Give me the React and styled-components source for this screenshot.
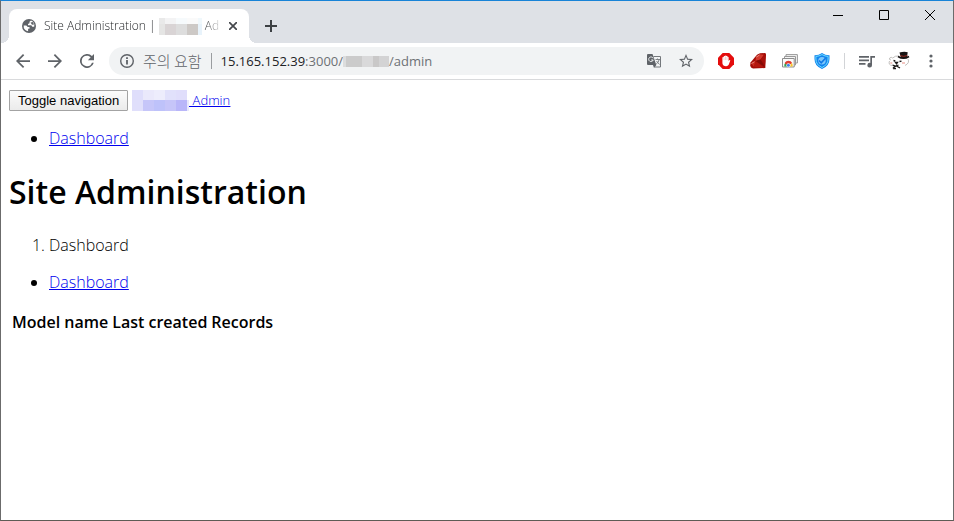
import React from 'react';
import styled, { createGlobalStyle } from 'styled-components';

const GlobalStyle = createGlobalStyle`
  body {
    margin: 0;
    font-family: 'Open Sans', 'Noto Sans CJK KR', sans-serif;
    color: #000;
    background: #fff;
  }

  * {
    box-sizing: border-box;
  }
`;

const Window = styled.div`
  display: flex;
  flex-direction: column;
  min-height: 100vh;
  background: #fff;
  border: 1px solid #6b6b6b;
  border-top-color: #1883d7;
  border-bottom-color: #5d5c55;
  overflow: hidden;
`;

const TitleBar = styled.div`
  display: flex;
  align-items: flex-start;
  height: 42px;
  padding-left: 8px;
  background: #dee1e6;
`;

const Tab = styled.div`
  position: relative;
  display: flex;
  align-items: center;
  width: 240px;
  height: 34px;
  margin-top: 8px;
  padding: 0 8px 0 13px;
  background: #fff;
  border-radius: 8px 8px 0 0;

  &::before,
  &::after {
    content: '';
    position: absolute;
    bottom: 0;
    width: 8px;
    height: 8px;
  }

  &::before {
    right: 100%;
    background: radial-gradient(circle at 0 0, #dee1e6 8px, #fff 8px);
  }

  &::after {
    left: 100%;
    background: radial-gradient(circle at 100% 0, #dee1e6 8px, #fff 8px);
  }
`;

const TabTitle = styled.div`
  display: flex;
  flex: 1;
  align-items: center;
  min-width: 0;
  margin-left: 8px;
  color: #1f2124;
  font-size: 12px;
  font-weight: 300;
  line-height: 18px;
  white-space: pre;
  mask-image: linear-gradient(to right, #000 88%, transparent 99%);
`;

const IconButton = styled.button`
  display: flex;
  flex: none;
  align-items: center;
  justify-content: center;
  width: ${({ $width }) => $width || 32}px;
  height: ${({ $height }) => $height || 28}px;
  padding: 0;
  color: ${({ $color }) => $color || '#5f6368'};
  background: none;
  border: 0;
`;

const NewTab = styled(IconButton)`
  margin: 11px 0 0 8px;
`;

const Controls = styled.div`
  display: flex;
  margin-left: auto;
`;

const Toolbar = styled.div`
  display: flex;
  align-items: center;
  height: 37px;
  padding: 0 6px;
  border-bottom: 1px solid #d9dadc;
`;

const Omnibox = styled.div`
  display: flex;
  flex: 1;
  align-items: center;
  min-width: 0;
  height: 28px;
  margin: 0 6px;
  padding: 0 2px 0 11px;
  color: #6d7175;
  font-size: 13px;
  font-weight: 400;
  background: #f1f3f4;
  border-radius: 14px;
`;

const Warning = styled.span`
  margin-left: 9px;
  color: #5f6368;
  font-family: 'Noto Sans CJK KR', sans-serif;
  font-size: 15px;
  font-weight: 300;
  line-height: 20px;
`;

const Address = styled.div`
  display: flex;
  flex: 1;
  align-items: center;
  margin-left: 9px;
`;

const Host = styled.span`
  color: #202124;
`;

const Divider = styled.span`
  width: 1px;
  height: 16px;
  margin-left: ${({ $gap }) => $gap}px;
  margin-right: ${({ $after }) => $after || 0}px;
  background: ${({ $color }) => $color};
`;

const Mosaic = styled.span`
  display: inline-grid;
  grid-template-columns: ${({ $columns }) => $columns};
  grid-template-rows: ${({ $rows }) => $rows};
  flex: none;
  vertical-align: middle;
`;

const Cell = styled.span`
  background: ${({ $color }) => $color};
`;

const Page = styled.main`
  flex: 1;
  padding: 8px;
  font-size: 16px;
  font-weight: 300;
  line-height: 21px;
`;

const NavHeader = styled.div`
  display: flex;
  align-items: center;
  height: 24px;
`;

const ToggleButton = styled.button`
  height: 21px;
  padding: 0 8px;
  color: #000;
  font-family: 'Liberation Sans', Arial, sans-serif;
  font-size: 13px;
  line-height: 17px;
  background: linear-gradient(#fbfbfb, #ebebeb);
  border: 1px solid #a3a3a3;
  border-radius: 1px;
`;

const Link = styled.a`
  color: #0000ee;
  text-decoration: underline;
`;

const Brand = styled(Link)`
  display: flex;
  align-items: center;
  margin-left: 4px;
  font-size: 13px;
  white-space: pre;
`;

const BrandText = styled.span`
  text-decoration: underline;
`;

const List = styled.ul`
  margin: 16px 0;
  padding-left: 40px;
`;

const Title = styled.h1`
  margin: 21px 0 22px;
  font-size: 32px;
  font-weight: 600;
  line-height: 43px;
`;

const ModelTable = styled.table`
  border-spacing: 2px;

  th {
    padding: 1px;
    font-weight: 600;
  }
`;

function Censored({ columns, rows, colors }) {
  return (
    <Mosaic $columns={columns} $rows={rows} aria-hidden="true">
      {colors.map((color, i) => <Cell key={i} $color={color} />)}
    </Mosaic>
  );
}

const GlobeIcon = () => (
  <svg width="14" height="14" viewBox="0 0 14 14">
    <circle cx="7" cy="7" r="7" fill="#5f6368" />
    <path d="M9 1.600 7.500 2.700v1.500L6 5v1.300h3.300l1 1.500h1.900A5.500 5.500 0 0 0 9 1.600z" fill="#fff" />
    <path d="M1.700 6.500h2.600l1.500 1.600h1.700v1.700H6.100v2.500A5.500 5.500 0 0 1 1.700 6.500z" fill="#fff" />
    <path d="M8.500 3.500 11 3l1 2.500-2 .3z" fill="#5f6368" />
  </svg>
);

const CloseIcon = () => (
  <svg width="8" height="8" viewBox="0 0 8 8" stroke="#45484c" strokeWidth="1.700">
    <path d="M0 0l8 8M8 0L0 8" />
  </svg>
);

const PlusIcon = () => (
  <svg width="12" height="12" viewBox="0 0 12 12" fill="#3c4043">
    <path d="M5 0h2v5h5v2H7v5H5V7H0V5h5z" />
  </svg>
);

const ArrowIcon = ({ forward }) => (
  <svg width="14" height="14" viewBox="4 4 16 16" fill="currentColor">
    <path d={forward
      ? 'M12 4l-1.410 1.410L16.170 11H4v2h12.170l-5.580 5.590L12 20l8-8z'
      : 'M20 11H7.830l5.590-5.590L12 4l-8 8 8 8 1.410-1.410L7.830 13H20z'} />
  </svg>
);

const ReloadIcon = () => (
  <svg width="14" height="14" viewBox="4 4 16 16" fill="currentColor">
    <path d="M17.650 6.350A8 8 0 1 0 19.730 14h-2.080A6 6 0 1 1 12 6c1.660 0 3.140.69 4.220 1.780L13 11h7V4z" />
  </svg>
);

const InfoIcon = () => (
  <svg width="14" height="14" viewBox="2 2 20 20" fill="#5f6368">
    <path d="M12 2a10 10 0 1 0 0 20 10 10 0 0 0 0-20zm0 18a8 8 0 1 1 0-16 8 8 0 0 1 0 16z" />
    <path d="M10.700 10.700h2.600V17h-2.600zM10.700 6.700h2.600v2.400h-2.600z" />
  </svg>
);

const TranslateIcon = () => (
  <svg width="14" height="14" viewBox="0 0 14 14">
    <path d="M6.500 2.500h7v10.500H7.500" fill="#f1f3f4" stroke="#74787c" />
    <path d="M0 1q0-1 1-1h4.500l3.800 11H1q-1 0-1-1z" fill="#5f6368" />
    <path d="M6 11h3.300L7 14z" fill="#5f6368" />
    <path d="M6.100 4.300A2.300 2.300 0 1 0 6.200 6H4.200" fill="none" stroke="#f1f3f4" />
    <path d="M8.500 5.500h4.500M10.500 4.500v1M12.200 5.500q-.6 3-3 4.500M9.500 7l3 3.500" fill="none" stroke="#74787c" strokeWidth=".9" />
  </svg>
);

const StarIcon = () => (
  <svg width="14" height="14" viewBox="2 2 20 20" fill="#5f6368">
    <path d="M22 9.240l-7.190-.62L12 2 9.190 8.630 2 9.240l5.460 4.730L5.820 21 12 17.270 18.180 21l-1.630-7.030zM12 15.400l-3.760 2.270 1-4.280-3.320-2.880 4.380-.38L12 6.100l1.710 4.040 4.380.38-3.320 2.880 1 4.280z" />
  </svg>
);

const BlockerIcon = () => (
  <svg width="16" height="16" viewBox="0 0 16 16">
    <path d="M4.700 0h6.600L16 4.700v6.600L11.300 16H4.700L0 11.300V4.700z" fill="#e40d0d" />
    <path d="M4.400 4.500q.5-.8 1.100-.3.200-1.400 1.200-1.300.9-1 1.600 0 1.200-.2 1.300 1 .9-.2 1 .6V8l.9-.9q.8-.2.8.5l-1.600 4.200Q9.900 13.300 8 13.200q-3.200 0-3.600-3z" fill="#fff" />
    <path d="M6 4.500V7M7.500 3.500V7M9 4V7" stroke="#f08a8a" strokeWidth=".4" />
  </svg>
);

const RubyIcon = () => (
  <svg width="16" height="16" viewBox="0 0 16 16">
    <path d="M7 1.700 10 .3 15 0q1 .2 1 1.500L15.300 15 3 15.600Q.5 15 .2 12.800L.5 9.500z" fill="#a30c06" />
    <path d="M6 3.500 9.800 1.200l4 .6-3.300 4.700L5.500 8z" fill="#d0382c" />
    <path d="M1 10l4.500-2L4 14z" fill="#c92a1e" />
    <path d="M5.500 8l5-1.500L15 14z" fill="#830b06" />
    <path d="M10.500 6.500 15.500 1l-.5 10z" fill="#a8100a" />
    <path d="M5.500 8 4 14l10 .5z" fill="#b3170e" />
    <path d="M6.500 4 9.500 2M1.500 10.500l3-1.800" stroke="#efa198" strokeWidth=".8" />
  </svg>
);

const CardsIcon = () => (
  <svg width="16" height="14" viewBox="0 0 16 14">
    <path d="M4 3V.6h11.400V9H13M2.500 5V2.500h11V11H12" fill="#f4f4f4" stroke="#999" />
    <path d="M.5 4.500h11.700V13H.5z" fill="#fafafa" stroke="#8d8d8d" />
    <path d="M2.300 12.500a4.200 4.200 0 0 1 1.300-4l2.700 4z" fill="#2fa84f" />
    <path d="M2.700 9a4.200 4.200 0 0 1 7.500 0L8 10.500H4z" fill="#e33b2e" />
    <path d="M10 9q1 1.500.5 3.500H7z" fill="#f7c527" />
    <circle cx="6.400" cy="11.300" r="2" fill="#fff" />
    <circle cx="6.400" cy="11.300" r="1.500" fill="#3f7ee8" />
  </svg>
);

const ShieldIcon = () => (
  <svg width="16" height="16" viewBox="0 0 16 16">
    <path d="M8 0q3.500 2.400 7.500 2.200V6q0 7-7.500 10Q.5 13 .5 6V2.200Q4.500 2.400 8 0z" fill="#1283ee" />
    <path d="M8 1.600q3 1.700 6.100 1.800V6q0 5.800-6.100 8.500Q1.900 11.800 1.900 6V3.400Q5 3.300 8 1.600z" fill="none" stroke="#6fe0ff" strokeWidth="1" />
    <circle cx="8" cy="7.700" r="3.700" fill="#7cc6fa" />
    <path d="M5 7.500 7.200 9.800 11.500 5.200" fill="none" stroke="#0f78e6" strokeWidth="1.600" />
  </svg>
);

const PlaylistIcon = () => (
  <svg width="16" height="13" viewBox="0 0 16 13" fill="#5f6368">
    <path d="M0 1h10v1.700H0zM0 4.500h10v1.700H0zM0 8h6.500v1.700H0z" />
    <path d="M11.300 1H16v1.800h-3v7.400a2.300 2.300 0 1 1-1.700-2.200z" />
  </svg>
);

const AvatarIcon = () => (
  <svg width="22" height="20" viewBox="0 0 22 20">
    <path d="M2.500 7Q1 7.500 1.500 9.500L0 13l4 3 8 1 7-3 2-4-4-4-8-2z" fill="#fff" />
    <path d="M3 9Q.6 8.800 1.700 7q1.400-1.500 3 0Q7 4.500 11 5M1.500 10Q0 14 4 14.500M20 8q2 4-3 6.500" fill="none" stroke="#b4b1ae" strokeWidth=".8" />
    <path d="M11.500 1.600Q16 0 19.700 1.200L19 6.500q-3 1.300-6 .2z" fill="#171414" />
    <path d="M12.300 4.700q3 1.300 7-.1" fill="none" stroke="#9e281e" strokeWidth="1" />
    <path d="M10 5.500q5.500 3.600 11 0" fill="none" stroke="#171414" strokeWidth="1.500" />
    <path d="M5.500 9.500l1.800.5M11.500 10.500l2-.4M7.500 11.500h2l-1 1.400zM4.500 14l3 1.200 3-1.200M7 15l-2 2.500M8.500 15l3.500 2M5 17.500h3" fill="none" stroke="#1b1717" strokeWidth="1.300" />
    <path d="M14 12h3M2.300 12h2" stroke="#f0b5af" strokeWidth="1.600" />
  </svg>
);

const MoreIcon = () => (
  <svg width="4" height="14" viewBox="0 0 4 14" fill="#5f6368">
    <circle cx="2" cy="2" r="1.600" />
    <circle cx="2" cy="7" r="1.600" />
    <circle cx="2" cy="12" r="1.600" />
  </svg>
);

const windowControls = [
  { label: 'Minimize', path: 'M0 5.500h10' },
  { label: 'Maximize', path: 'M.5.5h9v9h-9z' },
  { label: 'Close', path: 'M0 0l10 10M10 0L0 10' },
];

const extensions = [
  { label: 'Ad blocker', Icon: BlockerIcon },
  { label: 'Ruby', Icon: RubyIcon },
  { label: 'Web apps', Icon: CardsIcon },
  { label: 'Shield', Icon: ShieldIcon },
];

function TabStrip() {
  return (
    <TitleBar>
      <Tab>
        <GlobeIcon />
        <TabTitle>
          {'Site Administration | '}
          <Censored
            columns="6px 11px 11px 11px 4px"
            rows="6px 11px"
            colors={['#e9e9e9', '#f3f3f4', '#f6fafc', '#fafafa', '#f0f8fc',
              '#e5e5e4', '#d9d4d5', '#dddddd', '#cdc9c6', '#e8f3fb']}
          />
          {' Ad'}
        </TabTitle>
        <IconButton $width={16} $height={16} aria-label="Close tab"><CloseIcon /></IconButton>
      </Tab>
      <NewTab $width={28} aria-label="New tab"><PlusIcon /></NewTab>
      <Controls>
        {windowControls.map(({ label, path }) => (
          <IconButton key={label} $width={46} $color="#000" aria-label={label}>
            <svg width="10" height="10" viewBox="0 0 10 10" fill="none" stroke="currentColor">
              <path d={path} />
            </svg>
          </IconButton>
        ))}
      </Controls>
    </TitleBar>
  );
}

function AddressBar() {
  return (
    <Toolbar>
      <IconButton aria-label="Back"><ArrowIcon /></IconButton>
      <IconButton aria-label="Forward"><ArrowIcon forward /></IconButton>
      <IconButton aria-label="Reload"><ReloadIcon /></IconButton>
      <Omnibox>
        <InfoIcon />
        <Warning>주의 요함</Warning>
        <Divider $gap={9} $color="#9a9da0" />
        <Address>
          <Host>15.165.152.39</Host>
          <span>:3000/</span>
          <Censored
            columns="3px 16px 11px 6px 10px"
            rows="11px"
            colors={['#dcdddd', '#cbcbcb', '#d9d9da', '#c9c8c8', '#d3d3d4']}
          />
          <span>/admin</span>
        </Address>
        <IconButton aria-label="Translate"><TranslateIcon /></IconButton>
        <IconButton aria-label="Bookmark"><StarIcon /></IconButton>
      </Omnibox>
      {extensions.map(({ label, Icon }) => (
        <IconButton key={label} aria-label={label}><Icon /></IconButton>
      ))}
      <Divider $gap={6} $after={6} $color="#d2d4d7" />
      <IconButton aria-label="Playlist"><PlaylistIcon /></IconButton>
      <IconButton aria-label="Profile"><AvatarIcon /></IconButton>
      <IconButton aria-label="Menu"><MoreIcon /></IconButton>
    </Toolbar>
  );
}

function App() {
  return (
    <Window>
      <GlobalStyle />
      <TabStrip />
      <AddressBar />
      <Page>
        <NavHeader>
          <ToggleButton type="button">Toggle navigation</ToggleButton>
          <Brand href="#">
            <Censored
              columns="11px 11px 11px 11px 11px 2px"
              rows="10px 11px"
              colors={['#dfdefb', '#eae9fb', '#ededfc', '#e1e1fb', '#e0defb', '#fff',
                '#e0dffb', '#c6c6f9', '#bec2fa', '#c6c5f9', '#b9b6f9', '#e8e8fc']}
            />
            <BrandText>{' Admin'}</BrandText>
          </Brand>
        </NavHeader>
        <List>
          <li><Link href="#">Dashboard</Link></li>
        </List>
        <Title>Site Administration</Title>
        <List as="ol">
          <li>Dashboard</li>
        </List>
        <List>
          <li><Link href="#">Dashboard</Link></li>
        </List>
        <ModelTable>
          <thead>
            <tr>
              <th>Model name</th>
              <th>Last created</th>
              <th>Records</th>
            </tr>
          </thead>
        </ModelTable>
      </Page>
    </Window>
  );
}

export default App;
